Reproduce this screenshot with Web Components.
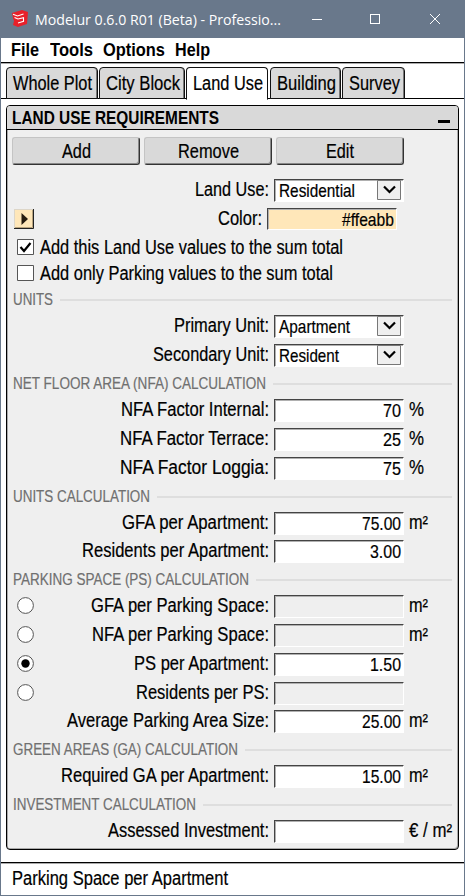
<!DOCTYPE html>
<html lang="en"><head><meta charset="utf-8"><title>Modelur</title>
<style>html,body{margin:0;height:100%}body{background:#fff;overflow:hidden;font-family:"Liberation Sans Narrow","Liberation Sans",sans-serif;color:#000}</style></head>
<body><modelur-window></modelur-window>
<script>
const define=(name,css,html,after)=>customElements.define(name,class extends HTMLElement{
  connectedCallback(){
    if(this.shadowRoot)return;
    const a=(k,d='')=>this.getAttribute(k)??d;
    this.attachShadow({mode:'open'}).innerHTML='<style>*{box-sizing:border-box}'+css+'</style>'+html(a,this);
    if(after)after(this,a);
  }});

// Text condensed horizontally to a given advance width.
define('fit-text',`:host{display:inline-block;height:22px;line-height:22px;flex:none;white-space:nowrap;font-size:19.5px;-webkit-text-stroke:.2px currentColor}
span{display:inline-block;transform-origin:0 50%;white-space:nowrap}`,
a=>'<span><slot></slot></span>',(el,a)=>{
  const w=+a('w'),s=el.shadowRoot.querySelector('span');
  el.style.width=w+'px';
  s.style.transform='scaleX('+w/s.getBoundingClientRect().width+')';
});

define('title-bar',`:host{display:flex;height:38px;background:#69788b;color:#fff;align-items:flex-start;padding-left:10px}
.logo{margin:9px 6px 0 0;flex:none}fit-text{font:15px/22px "Open Sans","Noto Sans",sans-serif;margin-top:8px;-webkit-text-stroke:0}
.win{margin:13px 0 0 auto}`,
()=>`<svg class="logo" width="18" height="19" viewBox="0 0 18 19"><path d="M1 4 11 1l6 2-1 12-9 3-5-2 1-4-1-3z" fill="#e8202a"/><path d="M2 5.200 6.500 7l6-2M3.500 8.500 7 10l5.500-1.300v3.600L7 14" fill="none" stroke="#fff" stroke-width="1.100"/></svg>
<fit-text w="246">Modelur 0.6.0 R01 (Beta) - Professio...</fit-text>
<svg class="win" width="153" height="13" fill="none" stroke="#fff" shape-rendering="crispEdges"><path d="M1 6.500h10M59.500 1.500h9v9h-9z"/><path d="m119 1 10 10m0-10-10 10" shape-rendering="auto"/></svg>`);

define('menu-bar',`:host{display:flex;height:26px;border-bottom:1px solid #aaa;box-shadow:inset 0 -1px #000;padding:1px 0 0 10px;font-weight:bold}
fit-text{font-size:19px;-webkit-text-stroke:0}`,
()=>[['File',28,11],['Tools',43,10],['Options',62,10],['Help',35,0]].map(m=>`<fit-text w="${m[1]}" style="margin-right:${m[2]}px">${m[0]}</fit-text>`).join(''));

define('nav-tab',`:host{display:block;flex:none;height:32px;border:1px solid #111;border-radius:4px 4px 0 0;background:#d9d9d9;padding:4px 0 0 5.5px;box-shadow:inset -1px 0 #777}
:host([active]){background:#fff;border-bottom-color:#fff;box-shadow:none;height:33px}`,
a=>`<fit-text w="${a('w')}"><slot></slot></fit-text>`);

define('tab-strip',`:host{display:flex;align-items:flex-start;height:33px;margin-top:3px;padding-left:5px;background:linear-gradient(#000,#000) 0 31px/100% 1px no-repeat}`,
()=>`<nav-tab w="79" style="width:92px;margin-right:1px">Whole Plot</nav-tab><nav-tab w="74" style="width:86px;margin-right:1px">City Block</nav-tab><nav-tab active w="70" style="width:82px;margin-right:2px">Land Use</nav-tab><nav-tab w="59" style="width:71px;margin-right:1px">Building</nav-tab><nav-tab w="51" style="width:63px">Survey</nav-tab>`);

define('push-button',`:host{display:flex;justify-content:center;width:128px;height:28px;border:1px solid;border-color:#c4c4c4 #333 #333 #c4c4c4;border-radius:3px;background:#d9d9d9;box-shadow:inset -1px -1px #888;padding-top:2px}`,
a=>`<fit-text w="${a('w')}"><slot></slot></fit-text>`);

define('section-title',`:host{display:flex;height:26px;color:#707070;padding:0 0 0 5.5px}
fit-text{font-size:16.500px;margin-top:-1px}
i{flex:1;height:2px;background:#dedede;margin:10px 6px 0 7px}`,
a=>`<fit-text w="${a('w')}"><slot></slot></fit-text><i></i>`);

define('check-row',`:host{display:flex;height:26px;padding-left:10px}
svg{margin:2px 6px 0 0;flex:none}fit-text{margin-top:-1px}`,
a=>`<svg width="17" height="16"><path d="M.5.5h16v15H.5z" fill="#fff" stroke="#555"/>${a('on')?'<path d="m3.500 8 3.500 4L13.500 4" fill="none" stroke="#000" stroke-width="2.200"/>':''}</svg><fit-text w="${a('w')}"><slot></slot></fit-text>`);

// One form line: optional left control, right-aligned label, field, unit.
define('field-row',`:host{display:grid;grid-template-columns:40px 227px 130px 1fr;height:29px;align-items:start}
:host([tight]){height:28px}
:host([color]){grid-template-columns:40px 220px 130px 1fr}
.lab{justify-self:end;margin:-1px 5px 0 0}
.box{height:23px;display:flex;justify-content:flex-end;background:#fff;border:solid;border-width:1px;border-color:#444 #fff #fff #444;box-shadow:inset 1px 1px #b0b0b0;padding-right:2px}
:host([off]) .box{background:#efefef}
:host([color]) .box{background:#ffe7b9;height:22px}
.box fit-text{font-size:18.500px}
:host([pick]) .box{justify-content:space-between;padding-left:4px}
.dd{flex:none}
.unit{margin:-1px 0 0 5px}
.left{display:block}`,
a=>{
  const v=a('value'),sw=a('color'),r=a('radio');
  const left=r?`<svg class="left" width="17" height="17" style="margin:2px 0 0 10px"><circle cx="8.500" cy="8.500" r="7.900" fill="#fff" stroke="#555"/>${r=='on'?'<circle cx="8.500" cy="8.500" r="4.200"/>':''}</svg>`
    :sw?`<svg class="left" width="20" height="20" style="margin:1px 0 0 7px"><path d="M0 0h20v20H0z" fill="#ddd6c8"/><path d="M1 1h18v18H1z" fill="#ffe7b9"/><path d="M19.500 0v19.500H0" fill="none" stroke="#222"/><path d="M18.500 1v17.500H1" fill="none" stroke="#b9a47e"/><path d="m7.500 4 6.500 6-6.500 6z" fill="#261c10"/></svg>`:'<span></span>';
  const dd=a('pick')?`<svg class="dd" width="24" height="20"><path d="M.5.5h23v19H.5z" fill="#efefef" stroke="#777"/><path d="m7 6.500 5.500 5.500L18 6.500" fill="none" stroke="#000" stroke-width="2.200"/></svg>`:'';
  return left+`<fit-text class="lab" w="${a('w')}"><slot></slot></fit-text><div class="box">${v?`<fit-text w="${a('vw')}">${v}</fit-text>`:''}${dd}</div>${a('unit')?`<fit-text class="unit" w="${a('uw','19')}">${a('unit')}</fit-text>`:''}`;
});

define('tool-panel',`:host{display:block;width:453px;height:745px;margin:5px 0 0 5px;background:#efefef;border:solid #000;border-width:1px;border-radius:4px;overflow:hidden;box-shadow:inset -1px -1px #aaa,inset 1px 0 #aaa}
header{display:flex;justify-content:space-between;height:24px;background:#d9d9d9;border-bottom:1px solid #000;padding:0 8px 0 5px;font-weight:bold}
header fit-text{font-size:18px;margin-top:1px;-webkit-text-stroke:0}header i{width:12px;height:3px;background:#000;margin-top:14px}
nav{display:flex;gap:4px;padding:7px 5px 0;height:49px}`,
a=>`<header><fit-text w="207">${a('heading')}</fit-text><i></i></header><nav><push-button w="29">Add</push-button><push-button w="61">Remove</push-button><push-button w="28">Edit</push-button></nav><slot></slot>`);

define('modelur-window',`:host{display:flex;flex-direction:column;width:465px;height:896px;border:1px solid #69788b;border-top:0;background:#fff;box-sizing:border-box}
footer{height:32px;margin-top:12px;border-top:1px solid #000;box-shadow:inset 0 1px #aaa;padding:4px 0 0 11px}`,
()=>`<title-bar></title-bar><menu-bar></menu-bar><tab-strip></tab-strip>
<tool-panel heading="LAND USE REQUIREMENTS">
<field-row w="74" pick="1" value="Residential" vw="76">Land Use:</field-row>
<field-row w="44" color="1" value="#ffeabb" vw="52">Color:</field-row>
<check-row w="303" on="1">Add this Land Use values to the sum total</check-row>
<check-row w="293">Add only Parking values to the sum total</check-row>
<section-title w="40">UNITS</section-title>
<field-row w="95" pick="1" value="Apartment" vw="71">Primary Unit:</field-row>
<field-row w="116" pick="1" value="Resident" vw="60">Secondary Unit:</field-row>
<section-title w="253">NET FLOOR AREA (NFA) CALCULATION</section-title>
<field-row w="148" value="70" vw="18" unit="%" uw="15">NFA Factor Internal:</field-row>
<field-row w="149" value="25" vw="18" unit="%" uw="15">NFA Factor Terrace:</field-row>
<field-row w="149" value="75" vw="18" unit="%" uw="15">NFA Factor Loggia:</field-row>
<section-title w="137">UNITS CALCULATION</section-title>
<field-row tight w="147" value="75.00" vw="39" unit="m²">GFA per Apartment:</field-row>
<field-row w="187" value="3.00" vw="31">Residents per Apartment:</field-row>
<section-title w="236">PARKING SPACE (PS) CALCULATION</section-title>
<field-row w="178" radio="off" off unit="m²">GFA per Parking Space:</field-row>
<field-row w="177" radio="off" off unit="m²">NFA per Parking Space:</field-row>
<field-row w="135" radio="on" value="1.50" vw="31">PS per Apartment:</field-row>
<field-row tight w="133" radio="off" off>Residents per PS:</field-row>
<field-row w="202" value="25.00" vw="39" unit="m²">Average Parking Area Size:</field-row>
<section-title w="225">GREEN AREAS (GA) CALCULATION</section-title>
<field-row w="208" value="15.00" vw="39" unit="m²">Required GA per Apartment:</field-row>
<section-title w="183">INVESTMENT CALCULATION</section-title>
<field-row w="161" unit="€ / m²" uw="43">Assessed Investment:</field-row>
</tool-panel>
<footer><fit-text w="216">Parking Space per Apartment</fit-text></footer>`);
</script></body></html>
